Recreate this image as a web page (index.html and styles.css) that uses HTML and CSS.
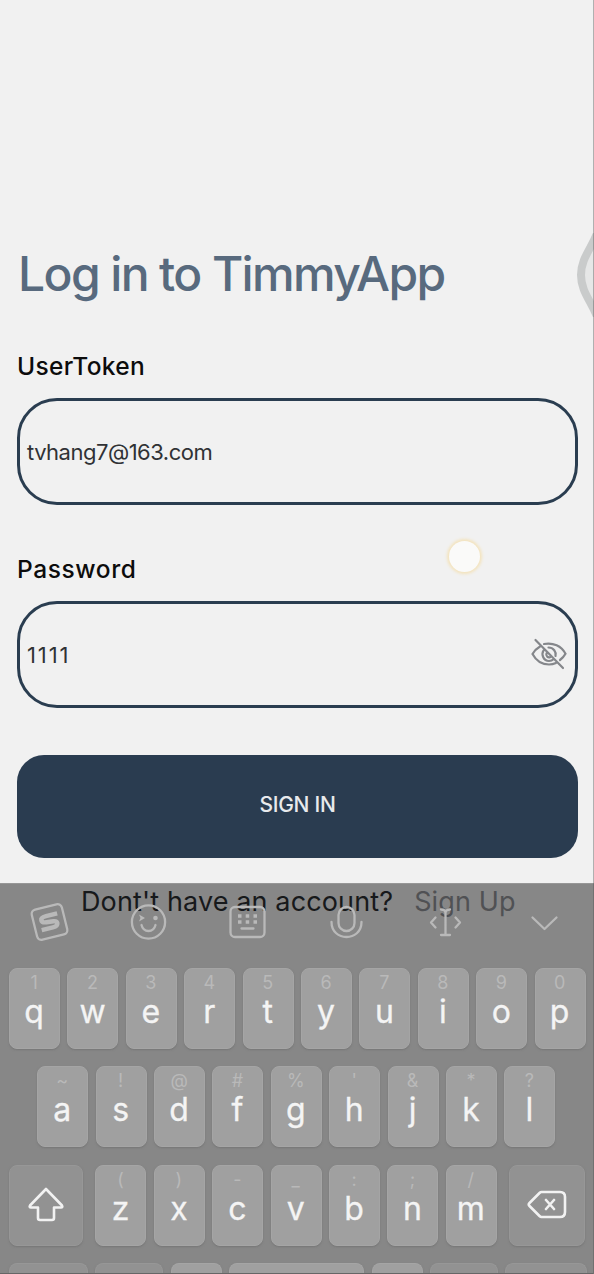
FILE: index.html
```html
<!DOCTYPE html>
<html lang="en">
<head>
<meta charset="utf-8">
<title>TimmyApp</title>
<link rel="stylesheet" href="styles.css">
</head>
<body>
<main class="screen">
  <h1 class="title"><span>Log in to TimmyApp</span></h1>
  <form class="form">
    <label class="label user">UserToken</label>
    <div class="field"><span class="email">tvhang7@163.com</span></div>
    <label class="label pass">Password</label>
    <div class="field"><span class="digits">1111</span>
      <svg class="eye" width="36" height="32" viewBox="0 0 36 32"><path d="M9 8.500C5.500 10.500 3 13.500 1.500 16C5 22.500 11 26.500 18 26.500C20.500 26.500 22.800 26 25 25M13 6C22 4.200 30.500 8 34.500 15.800C33 18.500 31 20.500 29 22M12.500 12.500C10 16.500 12.500 23 18 23C20 23 21.500 22.200 22.800 21M17.500 9.500C22.500 9.500 25.500 14 24.500 18M15.500 15.500C14.500 18 17.200 20.200 19.300 19M4.500 2L32 30"/></svg>
    </div>
    <div class="button"><span>SIGN IN</span></div>
  </form>
  <p class="footer"><span class="ask">Dont't have an account?</span><span class="signup">Sign Up</span></p>
</main>
<div class="touch"></div>
<svg class="handle" width="18" height="84" viewBox="0 0 18 84"><path d="M22 -2C16 15 5 25 5 42S16 69 22 86"/></svg>
<section class="keyboard">
  <div class="tools">
    <svg viewBox="0 0 44 44"><g transform="rotate(-14 22 22)"><rect x="6.500" y="6.500" width="31" height="31" rx="4.500"/><path class="thick" d="M31.500 15.500H20Q14.500 15.500 14.500 18.500Q14.500 21 19 21.500L26 22.200Q29.500 22.700 29.300 25Q29 28 24 28H12.500"/></g></svg>
    <svg viewBox="0 0 44 44"><circle cx="22" cy="22" r="16.600"/><path d="M15 25C17 33 27 33 29 25"/><circle class="solid" cx="29" cy="18" r="2.300"/><path class="solid" d="M12.500 14.500L18.500 18L12.500 21.500L14 18Z"/></svg>
    <svg viewBox="0 0 44 44"><rect x="5" y="7" width="34" height="30" rx="4.500"/><path d="M16 28.500H28"/><path class="dots" d="M12.500 16h3.500M20.200 16h3.500M28 16h3.500M12.500 22h3.500M20.200 22h3.500M28 22h3.500"/></svg>
    <svg viewBox="0 0 44 44"><rect x="14" y="7" width="16" height="24" rx="8"/><path d="M7 22C7 42 37 42 37 22"/></svg>
    <svg viewBox="0 0 44 44"><path d="M22 11V35M17.500 9.500Q22 9.500 22 13Q22 9.500 26.500 9.500M17.500 35H26.500M12 17.500L7.500 22.500L12 27.500M32 17.500L36.500 22.500L32 27.500"/></svg>
    <svg viewBox="0 0 44 44"><path d="M10 17.500L22 29L34 17.500"/></svg>
  </div>
  <div class="rows">
    <div class="row">
      <div class="key"><small>1</small><b>q</b></div><div class="key"><small>2</small><b>w</b></div><div class="key"><small>3</small><b>e</b></div><div class="key"><small>4</small><b>r</b></div><div class="key"><small>5</small><b>t</b></div><div class="key"><small>6</small><b>y</b></div><div class="key"><small>7</small><b>u</b></div><div class="key"><small>8</small><b>i</b></div><div class="key"><small>9</small><b>o</b></div><div class="key"><small>0</small><b>p</b></div>
    </div>
    <div class="row home">
      <div class="key"><small>~</small><b>a</b></div><div class="key"><small>!</small><b>s</b></div><div class="key"><small>@</small><b>d</b></div><div class="key"><small>#</small><b>f</b></div><div class="key"><small>%</small><b>g</b></div><div class="key"><small>'</small><b>h</b></div><div class="key"><small>&amp;</small><b>j</b></div><div class="key"><small>*</small><b>k</b></div><div class="key"><small>?</small><b>l</b></div>
    </div>
    <div class="row">
      <div class="key dark shift"><svg width="36" height="36" viewBox="0 0 36 36"><path d="M18 2L34 18.500Q35 20.500 33 20.500H26V31Q26 33 24 33H12Q10 33 10 31V20.500H3Q1 20.500 2 18.500Z"/></svg></div>
      <div class="key"><small>(</small><b>z</b></div><div class="key"><small>)</small><b>x</b></div><div class="key"><small>-</small><b>c</b></div><div class="key"><small>_</small><b>v</b></div><div class="key"><small>:</small><b>b</b></div><div class="key"><small>;</small><b>n</b></div><div class="key"><small>/</small><b>m</b></div>
      <div class="key dark back"><svg width="40" height="30" viewBox="0 0 40 30"><path d="M14.500 2H33Q38 2 38 7V22Q38 27 33 27H14.500Q13.500 27 12.500 26L2.500 16Q1 14.500 2.500 13L12.500 3Q13.500 2 14.500 2ZM19 10L27 19M27 10L19 19"/></svg></div>
    </div>
    <div class="row last">
      <div class="key dark wide"></div><div class="key dark mid"></div><div class="key"></div><div class="key space"></div><div class="key"></div><div class="key dark mid"></div><div class="key dark enter"></div>
    </div>
  </div>
</section>
<div class="edge"></div>
</body>
</html>
```
FILE: styles.css
```css
* { box-sizing: border-box; }
body { margin: 0; width: 594px; height: 1274px; position: relative; overflow: hidden; background: #f1f1f1; font-family: Inter, sans-serif; }
.screen { padding: 244px 16px 0 17px; }
.title { margin: 0; height: 106px; font-size: 48px; line-height: 60px; font-weight: 500; letter-spacing: -1.620px; color: #586a7e; white-space: nowrap; padding-left: 1px; }
.form { display: flex; flex-direction: column; }
.label { height: 48px; line-height: 32px; font-size: 24.500px; font-weight: 500; color: #0c0c0c; letter-spacing: .350px; }
.pass { margin-top: 48px; height: 48px; letter-spacing: .600px; }
.field { height: 107px; border: 3.5px solid #2a3d50; border-radius: 40px; padding: 0 8px 0 7px; display: flex; align-items: center; justify-content: space-between; font-size: 22px; color: #303235; }
.email { letter-spacing: -.500px; }
.digits { letter-spacing: 1.900px; }
.eye { fill: none; stroke: #85878b; stroke-width: 2.2; stroke-linecap: round; margin-top: -1px; }
.button { margin-top: 46.500px; height: 103.500px; border-radius: 27px; background: #2a3c50; display: flex; align-items: center; justify-content: center; padding-bottom: 4px; color: #e8eaec; font-size: 21px; font-weight: 500; letter-spacing: -.300px; }
.footer { position: relative; z-index: -1; margin: 27px 0 0 64px; height: 34px; line-height: 34px; font-size: 27px; display: flex; gap: 21px; white-space: nowrap; color: #17191b; letter-spacing: .130px; }
.signup { color: #505154; }
.touch { position: absolute; left: 449px; top: 541px; width: 31px; height: 31px; border-radius: 50%; background: #fafaf9; box-shadow: 0 0 3px 2px #f3e3bd; }
.handle { position: absolute; right: 0; top: 233px; fill: #e6e7e7; stroke: #c9cbcb; stroke-width: 8; }
.keyboard { position: absolute; left: 0; top: 883px; width: 594px; height: 391px; border-top: 1px solid #979797; overflow: hidden; }
.keyboard::before { content: ""; position: absolute; inset: 0; background: #878787; z-index: -2; }
.tools { height: 83.500px; display: flex; }
.tools svg { width: 99.100px; height: 44px; margin-top: 16px; fill: none; stroke: #b9b9b9; stroke-width: 2.3; stroke-linecap: round; stroke-linejoin: round; }
.tools .solid { fill: #b9b9b9; stroke: none; }
.tools .thick { stroke-width: 4.5; stroke-linecap: butt; }
.tools .dots { stroke-width: 3.5; stroke-linecap: butt; }
.rows { display: grid; gap: 17.600px; }
.row { height: 81px; display: flex; gap: 7.400px; padding-left: 9.100px; }
.home { padding-left: 37.300px; }
.last { height: 10px; }
.key { width: 51px; height: 100%; flex: none; border-radius: 8px; background: #a0a0a0; border: 1px solid #a5a5a5; box-shadow: 0 1px 2px #777; display: flex; flex-direction: column; align-items: center; color: #f4f4f4; }
.last .key { border-radius: 8px 8px 0 0; border-bottom: 0; }
.key small { height: 26px; line-height: 28px; font-size: 18px; color: #b9b9b9; margin-left: -1px; }
.key b { height: 36px; line-height: 33px; font-size: 32px; font-weight: 400; margin-left: -1px; -webkit-text-stroke: .3px #f4f4f4; }
.dark { background: #929292; border-color: #979797; justify-content: center; }
.key svg { fill: none; stroke: #f2f2f2; stroke-width: 2.600; stroke-linecap: round; stroke-linejoin: round; }
.shift { width: 74px; margin-right: 5px; }
.back { width: 76px; margin-left: 5px; }
.wide { width: 79px; }
.mid { width: 68px; }
.space { width: 135px; }
.enter { width: 82px; }
.edge { position: absolute; inset: 0; border-right: 1px solid rgba(80,80,80,.4); background: linear-gradient(#666,#666) bottom / 100% 1px no-repeat; }
```
